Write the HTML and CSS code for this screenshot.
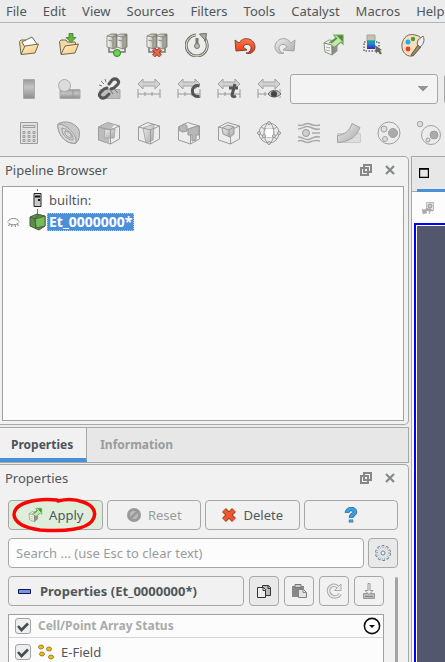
FILE: index.html
```html
<!DOCTYPE html>
<html lang="en">
<head>
<meta charset="utf-8">
<title>ParaView</title>
<link rel="stylesheet" href="styles.css">
</head>
<body>
<svg class="defs" aria-hidden="true">
  <defs>
    <linearGradient id="folder" x1="0" y1="0" x2="1" y2="1"><stop offset="0" stop-color="#fff0cf"/><stop offset="1" stop-color="#f8c87c"/></linearGradient>
    <linearGradient id="metal" x1="0" y1="0" x2="1" y2="0"><stop offset="0" stop-color="#fff"/><stop offset="1" stop-color="#8c8c80"/></linearGradient>
    <linearGradient id="gray" x1="0" y1="0" x2="1" y2="1"><stop offset="0" stop-color="#eee"/><stop offset="1" stop-color="#aaa"/></linearGradient>
    <linearGradient id="grayDown" x1="0" y1="0" x2="0" y2="1"><stop offset="0" stop-color="#999"/><stop offset=".4" stop-color="#c4c4c4"/><stop offset="1" stop-color="#8c8c8c"/></linearGradient>
    <linearGradient id="rainbow" x1="0" y1="0" x2="0" y2="1"><stop offset="0" stop-color="#20c8a0"/><stop offset=".4" stop-color="#1590e8"/><stop offset="1" stop-color="#4a20a0"/></linearGradient>
    <linearGradient id="red" x1="0" y1="0" x2="0" y2="1"><stop offset="0" stop-color="#ff7a50"/><stop offset="1" stop-color="#e8300c"/></linearGradient>
    <symbol id="folderBase" viewBox="0 0 24 24">
      <path d="M4 21 2.500 8.500 4 7h5l1.500 2H18l1 3" fill="#f5d9a0" stroke="#6e6a50"/>
      <path d="M4 21.500 8 13l13.500-2-3.500 9z" fill="url(#folder)" stroke="#6e6a50"/>
    </symbol>
    <symbol id="servers" viewBox="0 0 24 24">
      <path d="M4 14v5h16v-5" fill="none" stroke="#77776c" stroke-width="1.500"/>
      <g stroke="#77776c" stroke-width=".8"><path d="M2 3 6 1h6v13l-3 2-7-2z" fill="url(#metal)"/><path d="M12 3 15 1h7v13l-4 2-6-2z" fill="url(#metal)"/><path d="M2 3l6 1 4-2M8 4v12M12 3l6 1 4-2M18 4v12M3 7l4 1M13 7l4 1" fill="none"/></g>
    </symbol>
    <symbol id="applyBox" viewBox="0 0 24 24">
      <path d="M3 10 8 7l8 1v10l-5 4-7-3z" fill="#f4f4f0" stroke="#8a9a7c"/>
      <path d="M10.500 12 16 9v9l-5 4z" fill="#8f8f86"/>
      <path d="m3 10 8 2v10M11 12l5-3" fill="none" stroke="#7c8072"/>
      <path d="M5 14l4 1M5 17l4 1" stroke="#aaa"/>
      <path d="m8 10 7-5-2-3h9v9l-2-2-6 5" fill="#c4e4b2" stroke="#6cab50" stroke-width="1.200"/>
      <path d="m10 10 6-5M17 3h4v4z" fill="#3f8a2c" stroke="#4b8f38" stroke-width="1.500"/>
    </symbol>
    <symbol id="range" viewBox="0 0 24 24">
      <path d="m1 7 5-5v3h12V2l5 5-5 5V9H6v3z" fill="#d2d2d2" stroke="#a2a2a2"/>
      <path d="M1 12v9M23 12v9M1 17h22M8 15v4M15 15v4" fill="none" stroke="#999"/>
    </symbol>
    <symbol id="wireCube" viewBox="0 0 24 24">
      <path d="m1.500 6 9-4.500 12 3.500v13l-9 5-12-4zM1.500 6l12 3 9-4M13.500 9v14" fill="none" stroke="#9b9b9b"/>
    </symbol>
    <symbol id="undock" viewBox="0 0 12 12"><path d="M4 1h7v7H4zM1 4h7v7H1z" fill="none" stroke="#858987" stroke-width="2"/></symbol>
    <symbol id="close" viewBox="0 0 12 12"><path d="m2 2 8 8M10 2l-8 8" stroke="#858987" stroke-width="2.200"/></symbol>
    <symbol id="check" viewBox="0 0 12 12"><path d="m1 6 3.500 4L11 3.500" fill="none" stroke="#454d50" stroke-width="2.600"/></symbol>
  </defs>
</svg>

<nav class="menu">
  <a href="#">File</a><a href="#">Edit</a><a href="#">View</a><a href="#">Sources</a><a href="#">Filters</a><a href="#">Tools</a><a href="#">Catalyst</a><a href="#">Macros</a><a href="#">Help</a>
</nav>

<div class="toolbar">
  <div class="group">
    <button class="tool" aria-label="Open"><svg viewBox="0 0 24 24"><path d="M4 21 2.500 8.500 4 7h5l1.500 2H18l1 3" fill="#f5d9a0" stroke="#6e6a50"/><path d="m5 9 10-5 5 7-11 5z" fill="#fff" stroke="#6e6a50"/><path d="M4 21.500 8 13l13.500-2-3.500 9z" fill="url(#folder)" stroke="#6e6a50"/></svg></button>
    <button class="tool" aria-label="Save data"><svg viewBox="0 0 24 24"><use href="#folderBase"/><path d="M12 .5h4v4h3l-5 5-5-5h3z" fill="#60b840" stroke="#417a2c" stroke-width=".8"/></svg></button>
  </div>
  <div class="group">
    <button class="tool" aria-label="Connect"><svg viewBox="0 0 24 24"><use href="#servers"/><circle cx="12" cy="20" r="3.500" fill="#68d84d" stroke="#397b2a"/></svg></button>
    <button class="tool" aria-label="Disconnect"><svg viewBox="0 0 24 24"><use href="#servers"/><path d="m8.500 16 7 7M15.500 16l-7 7" stroke="#7e4435" stroke-width="4"/><path d="m8.500 16 7 7M15.500 16l-7 7" stroke="#f1644b" stroke-width="2.400"/></svg></button>
    <button class="tool" aria-label="Auto apply"><svg viewBox="0 0 24 24"><path d="M11 2A10.500 10.500 0 1 0 20 6" fill="none" stroke="#73766a" stroke-width="3"/><path d="M11 2A10.500 10.500 0 1 0 20 6" fill="none" stroke="#e7e9e0" stroke-width="1"/><path d="m14.500 1 7-.5-1 7z" fill="#a9aba1" stroke="#6d7064"/><path d="M12 5v7" stroke="#777a6e" stroke-width="3"/><circle cx="12" cy="13" r="2.500" fill="#b9bbb1" stroke="#777a6e"/></svg></button>
  </div>
  <div class="group">
    <button class="tool" aria-label="Undo"><svg viewBox="0 0 24 24"><path d="m2 7 1 11 11-1-4-3c3-5 9-2 8 2-1 3-3 4-5 4 5 2 9-2 9-6C22 6 11 2 6 10z" fill="url(#red)" stroke="#7b4435"/></svg></button>
    <button class="tool" aria-label="Redo"><svg viewBox="0 0 24 24"><path d="m22 7-1 11-11-1 4-3C11 9 5 12 6 16c1 3 3 4 5 4-5 2-9-2-9-6C2 6 13 2 18 10z" fill="url(#gray)" stroke="#a2a2a2"/></svg></button>
  </div>
  <div class="group">
    <button class="tool" aria-label="Apply changes"><svg viewBox="0 0 24 24"><use href="#applyBox"/></svg></button>
    <button class="tool" aria-label="Color query"><svg viewBox="0 0 24 24"><path d="M6 2h8v6H6z" fill="#c8c0b4" stroke="#a8a39a"/><path d="M6 7h8v9H6z" fill="url(#rainbow)"/><path d="M3 9h15v9H3z" fill="none" stroke="#666957" stroke-width="1.500" stroke-dasharray="1.500 1.500"/><path d="m14 12 7 5-2 .5 2 3-2 1-2-3-2 2z" fill="#66685c"/></svg></button>
    <button class="tool" aria-label="Color palette"><svg viewBox="0 0 24 24"><path d="M11 23C5 24 0 18 1 11 2 4 8 0 14 2c6 1 8 5 7 8-2 4-6 3-6 6s-1 6-4 7z" fill="#f8dfba" stroke="#6d6b58"/><circle cx="7" cy="9" r="2.500" fill="#23aaf0"/><circle cx="12" cy="6" r="2.200" fill="#559739"/><circle cx="7" cy="16" r="2.400" fill="#e43b2a"/><path d="m17 12 3 2-8 9-2-1z" fill="#9d8860" stroke="#61604c"/><path d="m16 11 1-4 5-4c2 4 1 8-3 11z" fill="#eee" stroke="#6c6c62"/></svg></button>
  </div>
</div>

<div class="toolbar">
  <div class="group">
    <button class="tool" aria-label="Color legend"><svg viewBox="0 0 24 24"><path d="M6.500 2.500h11v19h-11z" fill="url(#grayDown)" stroke="#aaa"/></svg></button>
    <button class="tool" aria-label="Edit colors"><svg viewBox="0 0 24 24"><path d="M3 12.500h20v9H3z" fill="url(#grayDown)" stroke="#aaa"/><path d="M16 13v8" stroke="#999"/><circle cx="7.500" cy="8.500" r="6" fill="#dcdcdc" stroke="#aaa"/></svg></button>
    <button class="tool" aria-label="Separate color map"><svg viewBox="0 0 24 24"><path d="M3 12.500h20v9H3z" fill="#bdbdbd" stroke="#aaa"/><g fill="none" stroke="#555" stroke-width="3" stroke-linecap="round"><path d="m12 7 3-4c4-3 8 1 6 4l-4 4-3 1"/><path d="m12 17-3 3c-4 3-8-1-6-4l4-4 3-1"/></g><path d="m4 4 3 3M8 2l1 3M2 8l3 1M14 14l2 3M18 13l3 3" stroke="#777"/></svg></button>
    <button class="tool" aria-label="Rescale to data range"><svg viewBox="0 0 24 24"><use href="#range"/></svg></button>
    <button class="tool" aria-label="Rescale to custom range"><svg viewBox="0 0 24 24"><use href="#range"/><path d="M22.500 9c-9-3-10 12 0 10.500" fill="none" stroke="#555" stroke-width="3"/></svg></button>
    <button class="tool" aria-label="Rescale over time"><svg viewBox="0 0 24 24"><use href="#range"/><path d="m18 7-3 11c0 2 2 2 4 1M12 11h9" fill="none" stroke="#555" stroke-width="3"/></svg></button>
    <button class="tool" aria-label="Rescale to visible range"><svg viewBox="0 0 24 24"><use href="#range"/><ellipse cx="17" cy="17" rx="7" ry="5" fill="#eee"/><path d="M11 17c3-5 10-5 13 0-4 4-10 4-13 0z" fill="#bbb" stroke="#666"/><circle cx="17" cy="17" r="3" fill="#444"/></svg></button>
  </div>
  <select class="array-select" aria-label="Coloring array"><option></option></select>
  <select class="component-select" aria-label="Component"><option></option></select>
</div>

<div class="toolbar">
  <div class="group">
    <button class="tool" aria-label="Calculator"><svg viewBox="0 0 24 24"><g fill="none" stroke="#9d9d9d"><path d="M3.500 1.500h17v21h-17z" fill="#e0e0e0"/><path d="M6 4.500h12v2H6zM6 10.500h2v2H6zM11 10.500h2v2h-2zM16 10.500h2v2h-2zM6 14.500h2v2H6zM11 14.500h2v2h-2zM16 14.500h2v2h-2zM6 18.500h2v2H6zM11 18.500h2v2h-2zM16 18.500h2v2h-2z"/></g></svg></button>
    <button class="tool" aria-label="Contour"><svg viewBox="0 0 24 24"><path d="M1 3c6-4 15-2 20 4 3 5 1 13-2 15C9 24 0 13 1 3z" fill="#c8c8c8" stroke="#999"/><g fill="#d8d8d8" stroke="#999"><path d="M1 3c9 0 20 12 18 19C9 24 0 13 1 3z"/><path d="M5 7c7 1 12 8 11 12C9 19 4 12 5 7z"/><path d="M8 10c5 1 7 4 6 7-4-1-7-4-6-7z"/></g></svg></button>
    <button class="tool" aria-label="Clip"><svg viewBox="0 0 24 24"><path d="m2 6 9-4 6 2-4 5-1 13-10-3z" fill="#bcbcbc"/><path d="M8 8h10l-1 9H7z" fill="url(#gray)" stroke="#aaa"/><use href="#wireCube"/></svg></button>
    <button class="tool" aria-label="Slice"><svg viewBox="0 0 24 24"><path d="m6 7 11-4-1 16-7 3z" fill="url(#gray)" stroke="#aaa"/><use href="#wireCube"/></svg></button>
    <button class="tool" aria-label="Threshold"><svg viewBox="0 0 24 24"><use href="#wireCube"/><path d="m2 6 5-3 3 2v5l-5 1-3-2zM11 8l6-2 5-1v9h-3v5l-4 1v-6h-4z" fill="#b7b7b7" stroke="#999"/></svg></button>
    <button class="tool" aria-label="Extract subset"><svg viewBox="0 0 24 24"><use href="#wireCube"/><path d="m5 7 6-3 6 2v7l-4 3-7-3z" fill="url(#gray)" stroke="#999"/><path d="m6 7 6 2 5-3M12 9v7" fill="none" stroke="#999"/></svg></button>
    <button class="tool" aria-label="Glyph"><svg viewBox="0 0 24 24"><g fill="none" stroke="#999"><circle cx="12" cy="12" r="10"/><ellipse cx="12" cy="12" rx="5" ry="10"/><path d="M2 12c3 5 17 5 20 0M4 6c4 3 12 3 16 0M4 18c4-3 12-3 16 0"/></g><path d="M9 8h7v8H9z" fill="#fff"/><g fill="#ddd" stroke="#999"><circle cx="12" cy="2" r="1.500"/><circle cx="12" cy="22" r="1.500"/><circle cx="2" cy="12" r="1.500"/><circle cx="22" cy="12" r="1.500"/><circle cx="7" cy="15" r="1.500"/><circle cx="17" cy="15" r="1.500"/></g></svg></button>
    <button class="tool" aria-label="Stream tracer"><svg viewBox="0 0 24 24"><g fill="none" stroke="#aaa" stroke-width="1.500"><path d="M1 4c5 2 7-3 12-1 4 2 6 2 10 1M1 8c5 0 7-4 12-2 4 2 6 3 10 2M15 12h8M1 16c5 0 7 4 12 2 4-2 6-3 10-2M1 20c5-2 7 3 12 1 4-2 6-2 10-1"/></g><circle cx="9" cy="12" r="3.500" fill="#d0d0d0" stroke="#999"/></svg></button>
    <button class="tool" aria-label="Warp"><svg viewBox="0 0 24 24"><path d="M.5 12.500h23v9H.5z" fill="#ddd" stroke="#ccc"/><path d="M.5 14.500C8 14 13 9 15 2.500l8 4C20 15 13 21 .5 21.500z" fill="url(#gray)" stroke="#a2a2a2"/></svg></button>
    <button class="tool" aria-label="Group datasets"><svg viewBox="0 0 24 24"><g fill="#ddd" stroke="#a0a0a0"><circle cx="12" cy="12" r="11" fill="none"/><circle cx="7" cy="8" r="3"/><circle cx="8" cy="18" r="2.500"/><circle cx="16" cy="12" r="4.500" fill="#aaa"/></g></svg></button>
    <button class="tool" aria-label="Extract group"><svg viewBox="0 0 24 24"><g fill="#ddd" stroke="#a0a0a0"><circle cx="14" cy="14" r="9.500" fill="none"/><circle cx="3" cy="3" r="2.800"/><circle cx="11" cy="19" r="2"/><circle cx="17" cy="14" r="4" fill="#aaa"/></g></svg></button>
  </div>
</div>

<main class="workspace">
  <div class="docks">
    <section class="dock pipeline">
      <header class="dock-title"><h2>Pipeline Browser</h2><button aria-label="Float pipeline browser"><svg viewBox="0 0 12 12"><use href="#undock"/></svg></button><button aria-label="Close pipeline browser"><svg viewBox="0 0 12 12"><use href="#close"/></svg></button></header>
      <ul class="tree">
        <li><span class="eye"></span><svg class="node" viewBox="0 0 18 22"><path d="M8.500 0v2M8.500 20v2" stroke="#777"/><path d="M5 4.500h7v13H5z" fill="#c9c9c9" stroke="#222"/><path d="M6 6.500h5v2H6zM9 10h2v2H9z" fill="#111"/></svg><span class="label">builtin:</span></li>
        <li><svg class="eye" viewBox="0 0 12 12"><path d="M.5 5.500c2-4 9-4 11 0M.5 6.500c2 3 9 3 11 0M2 8 1 10M4.500 9 4 11M7.500 9l.5 2M10 8l1 2" fill="none" stroke="#858985"/></svg><svg class="node" viewBox="0 0 18 22"><path d="M8.500 0v4" stroke="#777"/><path d="m1 6 7-3 8 2v10l-6 4-9-4z" fill="#5c8c47" stroke="#4a5a40"/><path d="m6 8 10-3v10l-9 2z" fill="#75bd59" stroke="#48653c"/><path d="m1 6 5 2 1 10M6 8l4-5" fill="none" stroke="#48653c"/></svg><span class="label selected">Et_0000000*</span></li>
      </ul>
    </section>

    <nav class="tabs"><button class="active">Properties</button><button>Information</button></nav>

    <section class="dock properties">
      <header class="dock-title"><h2>Properties</h2><button aria-label="Float properties"><svg viewBox="0 0 12 12"><use href="#undock"/></svg></button><button aria-label="Close properties"><svg viewBox="0 0 12 12"><use href="#close"/></svg></button></header>
      <div class="form">
        <div class="actions">
          <button class="btn apply"><svg viewBox="0 0 24 24"><use href="#applyBox"/></svg>Apply<svg class="mark" viewBox="0 0 88 38" aria-hidden="true"><path d="M46 4C24 2 3 7 3 19c1 8 12 13 26 15 26 2 46-1 52-9 6-8 1-16-9-19-8-3-17-3-25-1" fill="none" stroke="#fa0505" stroke-width="3.500" stroke-linecap="round"/></svg></button>
          <button class="btn muted"><svg viewBox="0 0 16 16"><circle cx="8" cy="8" r="7" fill="#999"/><circle cx="8" cy="8" r="4" fill="#bbb"/><path d="m4 12 8-8" stroke="#999" stroke-width="2.500"/></svg>Reset</button>
          <button class="btn"><svg viewBox="0 0 16 16"><path d="m3 3 10 10M13 3 3 13" stroke="#8c4433" stroke-width="5.500"/><path d="m3 3 10 10M13 3 3 13" stroke="#f4562c" stroke-width="3.800"/></svg>Delete</button>
          <button class="btn" aria-label="Help"><svg viewBox="0 0 16 16"><g fill="none" stroke="#4c6a80" stroke-width="4.500"><path d="M4 6c0-5 8-5 8-1 0 3-4 2-4 6M8 12.500v3"/></g><g fill="none" stroke="#2fa4ee" stroke-width="3"><path d="M4 5.500c0-4.500 8-4.500 8-.5 0 3-4 2-4 5.500M8 13v2"/></g></svg></button>
        </div>
        <div class="search-row">
          <input class="search" type="text" aria-label="Search properties" placeholder="Search ... (use Esc to clear text)">
          <button class="btn square" aria-label="Advanced properties"><svg viewBox="0 0 16 16"><circle cx="8" cy="8" r="6.500" fill="none" stroke="#77838d" stroke-width="3" stroke-dasharray="2.500 1.580"/><circle cx="8" cy="8" r="5.800" fill="none" stroke="#e0e9ef" stroke-width="2.500" stroke-dasharray="1.500 2.140" stroke-dashoffset="-.4"/><circle cx="8" cy="8" r="5" fill="#dce5eb"/><circle cx="8" cy="8" r="2" fill="#f4f4f4" stroke="#77838d"/></svg></button>
        </div>
        <div class="scroll-area">
          <div class="scroll-content">
            <div class="section-row">
              <button class="btn section"><svg viewBox="0 0 13 13"><path d="M.5 4.500h12v4H.5z" fill="#7897dc" stroke="#10185c"/></svg>Properties (Et_0000000*)</button>
              <button class="btn square active-tool" aria-label="Copy"><svg viewBox="0 0 16 16"><path d="M6.500 2.500h6l2 2v8h-8z" fill="#bbb" stroke="#333"/><path d="M1.500 4.500h6l2 2v8h-8z" fill="#eee" stroke="#333"/><path d="M7 4.500v3h3M12 2.500v3h3" fill="none" stroke="#333"/></svg></button>
              <button class="btn square" aria-label="Paste"><svg viewBox="0 0 16 16"><path d="M1 3h12v11H1z" fill="#888"/><path d="M4 1.500h6v3H4z" fill="#ccc" stroke="#777"/><path d="M7.500 6.500h5l3 3v5h-8z" fill="#e4e4e4" stroke="#808080"/><path d="M12 6.500v3h3" fill="none" stroke="#888"/></svg></button>
              <button class="btn square" aria-label="Restore"><svg viewBox="0 0 16 16"><path d="M12 4C7 0 1 4 3 10c2 5 9 5 11 1" fill="none" stroke="#aaa" stroke-width="3.500"/><path d="M15 1v6.500H8.500z" fill="#eee" stroke="#aaa"/><path d="M12 4C7 0 1 4 3 10c2 5 9 5 11 1" fill="none" stroke="#eee" stroke-width="1.500"/></svg></button>
              <button class="btn square" aria-label="Save as default"><svg viewBox="0 0 16 16"><path d="M2.500 10.500h11v5h-11z" fill="#bbb" stroke="#999"/><path d="M7 .5h2v7h3l-4 4-4-4h3z" fill="#eee" stroke="#999"/><path d="M4 13.500h8" stroke="#888"/></svg></button>
            </div>
            <table class="arrays">
              <thead><tr><th><div class="cell"><label class="check"><input type="checkbox" checked><svg viewBox="0 0 12 12"><use href="#check"/></svg><span>Cell/Point Array Status</span></label><button class="filter" aria-label="Array options"><svg viewBox="0 0 18 18"><circle cx="9" cy="9" r="7.600" fill="#fff" stroke="#111" stroke-width="1.600"/><path d="M6 8h6l-3 3z" fill="#111"/></svg></button></div></th></tr></thead>
              <tbody><tr><td><div class="cell"><label class="check"><input type="checkbox" checked><svg viewBox="0 0 12 12"><use href="#check"/></svg><svg class="points" viewBox="0 0 16 16"><g fill="#f3ba16" stroke="#8b6a19" stroke-width=".8"><ellipse cx="3" cy="3" rx="2.500" ry="2"/><ellipse cx="11" cy="5" rx="2.500" ry="2"/><ellipse cx="4" cy="10" rx="2.500" ry="2"/><ellipse cx="13" cy="13" rx="2.500" ry="2"/></g></svg><span>E-Field</span></label></div></td></tr></tbody>
            </table>
          </div>
          <div class="scrollbar"></div>
        </div>
      </div>
    </section>
  </div>

  <section class="viewer">
    <div class="layout-tabs"><button aria-label="Layout"><svg viewBox="0 0 10 10"><path d="M.5.500h9v9h-9zM0 1h10" fill="none" stroke="#000" stroke-width="1.400"/></svg></button></div>
    <div class="view-tools"><button aria-label="Camera undo"><svg viewBox="0 0 14 14"><path d="M5.500 1.500h7v8h-7z" fill="#e4e4e4" stroke="#bbb"/><circle cx="9" cy="5" r="2" fill="#ccc" stroke="#999"/><path d="m1 8 1 5 4-1-1-1c2-3 4-1 3 2 4-4 0-8-5-4z" fill="#aaa" stroke="#aaa" stroke-width=".5"/><path d="m9 8 3 2" stroke="#999"/></svg></button></div>
    <div class="canvas"></div>
  </section>
</main>
</body>
</html>
```
FILE: styles.css
```css
* {
  box-sizing: border-box;
}

body {
  margin: 0;
  height: 100vh;
  display: flex;
  flex-direction: column;
  overflow: hidden;
  background: #ececec;
  color: #50575a;
  font: 13px/18px "Noto Sans", sans-serif;
}

button, input, select {
  font: inherit;
  color: inherit;
}

button {
  padding: 0;
  border: 0;
  background: none;
}

svg {
  display: block;
  flex: none;
}

.defs {
  position: absolute;
  width: 0;
  height: 0;
}

.menu {
  display: flex;
  flex: none;
  gap: 16px;
  height: 23px;
  padding: 2px 0 2px 6px;
  border-bottom: 1px solid #b5b5b5;
  white-space: nowrap;
}

.menu a {
  color: inherit;
  text-decoration: none;
}

.toolbar {
  display: flex;
  flex: none;
  align-items: center;
  gap: 24px;
  height: 44px;
  padding-left: 17px;
  overflow: hidden;
}

.toolbar .group {
  display: flex;
  flex: none;
  gap: 16px;
}

.tool, .tool svg {
  width: 24px;
  height: 24px;
}

.array-select, .component-select {
  appearance: none;
  flex: none;
  height: 30px;
  border: 1px solid #a5a8a6;
  border-radius: 3px;
}

.array-select {
  width: 148px;
  margin-left: -15px;
  background-color: #f3f3f3;
  background-image: linear-gradient(to bottom left, #929694 50%, transparent 50%), linear-gradient(to bottom right, #929694 50%, transparent 50%);
  background-repeat: no-repeat;
  background-size: 5px 6px;
  background-position: right 14px center, right 9px center;
}

.component-select {
  width: 60px;
  margin-left: -18px;
  background: #e2e2e2;
}

.workspace {
  flex: 1;
  min-height: 0;
  display: flex;
  gap: 2px;
  margin-top: 1px;
}

.docks {
  flex: 0 0 409px;
  display: flex;
  flex-direction: column;
}

.dock {
  border: solid #a7a9a8;
  border-width: 1px 1px 1px 0;
  background: #f1f1f1;
}

.pipeline {
  flex: none;
  height: 269px;
  display: flex;
  flex-direction: column;
  padding: 0 4px 3px 2px;
  border-radius: 0 5px 5px 0;
}

.dock-title {
  display: flex;
  align-items: center;
  flex: none;
  height: 29px;
  gap: 12px;
  padding: 0 8px 3px 3px;
}

.dock-title h2 {
  flex: 1;
  margin: 0;
  font-size: 13px;
  font-weight: 400;
}

.dock-title svg {
  width: 12px;
  height: 12px;
}

.tree {
  flex: 1;
  margin: 0;
  padding: 2px 4px;
  border: 1px solid #a0a0a0;
  background: #fcfcfc;
  list-style: none;
}

.tree li {
  display: flex;
  align-items: center;
  height: 22px;
}

.eye {
  width: 13px;
  height: 12px;
  margin-right: 9px;
}

.node {
  width: 18px;
  height: 22px;
}

.label {
  padding: 0 2px;
}

.selected {
  background: #4a90d9;
  color: #fff;
  font-size: 14px;
  font-weight: 700;
  outline: 1px dotted #d9bc98;
  outline-offset: -1px;
}

.tabs {
  display: flex;
  flex: none;
  height: 36px;
  margin: 2px 0 1px;
  border: solid #a7a9a8;
  border-width: 1px 1px 1px 0;
  background: #e7e7e7;
}

.tabs button {
  padding: 0 13px;
  color: #999c9b;
  font-size: 12px;
  font-weight: 700;
}

.tabs .active {
  padding: 3px 13px 0 11px;
  border-right: 1px solid #a7a9a8;
  border-bottom: 4px solid #4a90d9;
  background: #f1f1f1;
  color: #4d5457;
}

.properties {
  flex: 1;
  min-height: 0;
  display: flex;
  flex-direction: column;
  border-bottom: 0;
  border-radius: 0 5px 0 0;
}

.properties .dock-title {
  padding: 0 12px 3px 5px;
}

.form {
  flex: 1;
  min-height: 0;
  display: flex;
  flex-direction: column;
  gap: 8px;
  padding: 6px 10px 0 8px;
}

.actions {
  display: grid;
  grid-template-columns: repeat(4, 1fr);
  gap: 4px;
}

.btn {
  display: flex;
  align-items: center;
  justify-content: center;
  gap: 6px;
  height: 30px;
  border: 1px solid #a5a8a6;
  border-radius: 4px;
  background: #f1f1f1;
}

.btn svg {
  width: 16px;
  height: 16px;
}

.apply {
  position: relative;
  background: #dfeeda;
}

.btn .mark {
  position: absolute;
  top: -5px;
  left: 2px;
  width: 88px;
  height: 38px;
}

.muted {
  color: #999c9b;
}

.search-row {
  display: flex;
  gap: 4px;
}

.search {
  flex: 1;
  min-width: 0;
  height: 30px;
  padding: 0 7px;
  border: 1px solid #a5a8a6;
  border-radius: 4px;
  background: #fcfcfc;
}

.search::placeholder {
  color: #999c9b;
}

.square {
  flex: 0 0 30px;
}

.search-row .square, .active-tool {
  background: #e9e9e9;
}

.scroll-area {
  flex: 1;
  min-height: 0;
  display: flex;
  gap: 11px;
}

.scroll-content {
  flex: 1;
  min-width: 0;
}

.section-row {
  display: flex;
  gap: 5px;
  margin-bottom: 8px;
}

.section {
  flex: 1;
  justify-content: flex-start;
  gap: 9px;
  padding-left: 9px;
  font-weight: 700;
}

.section svg {
  width: 13px;
  height: 13px;
}

.scrollbar {
  width: 3px;
  margin-top: 1px;
  border-radius: 2px 2px 0 0;
  background: #a0a4a2;
}

.arrays {
  width: 100%;
  border: 1px solid #a0a0a0;
  border-spacing: 0;
  background: #fcfcfc;
}

.arrays th, .arrays td {
  padding: 0;
  text-align: left;
}

.arrays th {
  border-bottom: 1px solid #d5d5d5;
  color: #a9abaa;
  font-size: 12px;
}

.cell {
  display: flex;
  align-items: center;
  justify-content: space-between;
  height: 22px;
  padding: 0 2px 0 6px;
}

.arrays td .cell {
  height: 27px;
}

.check {
  display: flex;
  align-items: center;
  gap: 7px;
}

.check input {
  appearance: none;
  width: 16px;
  height: 16px;
  margin: 0;
  border: 1px solid #a0a4a2;
  border-radius: 3px;
  background: #eee;
}

.check input + svg {
  width: 12px;
  height: 12px;
  margin: 0 2px 0 -21px;
}

.points {
  width: 16px;
  height: 16px;
}

.filter svg {
  width: 18px;
  height: 18px;
}

.viewer {
  flex: 1;
  min-width: 0;
  display: flex;
  flex-direction: column;
  border: solid #a7a9a8;
  border-width: 1px 0 0 1px;
  background: #fcfcfc;
}

.layout-tabs {
  height: 35px;
  padding-left: 5px;
  border-bottom: 1px solid #a7a9a8;
  background: #e7e7e7;
}

.layout-tabs button {
  width: 100%;
  height: 35px;
  padding: 0 2px;
  border-bottom: 3px solid #4a90d9;
}

.layout-tabs svg {
  width: 10px;
  height: 10px;
}

.view-tools {
  height: 31px;
  padding: 9px;
}

.view-tools svg {
  width: 14px;
  height: 14px;
}

.canvas {
  flex: 1;
  margin-left: 2px;
  border: solid #0000f5;
  border-width: 2px 0 0 2px;
  background: #52576e;
  box-shadow: inset 1px 1px #fff;
}
```
